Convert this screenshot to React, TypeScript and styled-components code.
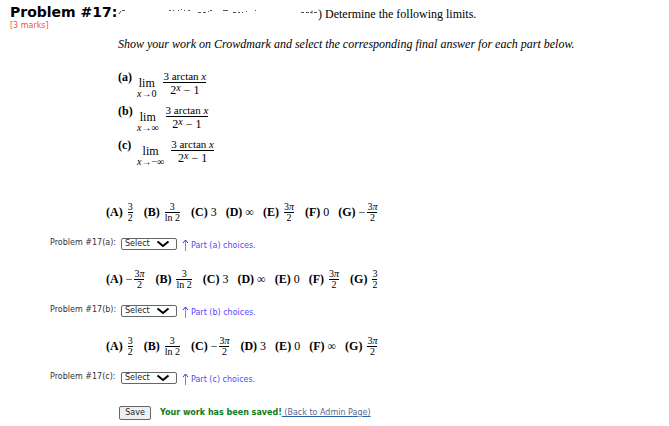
import React from "react";
import styled, { createGlobalStyle } from "styled-components";

const Global = createGlobalStyle`
  * { box-sizing: border-box; }
  body { margin: 0; background: #fff; color: #000; }
`;

const serif = `"Liberation Serif", "Times New Roman", serif`;
const sans = `"DejaVu Sans", Verdana, sans-serif`;

const Page = styled.form`
  padding: 3px 10px 0;
  font: 12px/16px ${serif};
`;
const Header = styled.header`
  display: grid;
  grid-template-columns: 108px 1fr;
`;
const Title = styled.h1`
  margin: 0;
  font: bold 14px/18px ${sans};
  white-space: nowrap;
`;
const Marks = styled.div`
  font: 8px/9px ${sans};
  color: #ff4a4a;
`;
const Statement = styled.div`
  display: flex;
  padding-top: 3px;
`;
const Faded = styled.svg`
  flex: none;
  width: 200px;
  height: 16px;
`;
const Instruction = styled.p`
  margin: 4px 0 0 108px;
  font-style: italic;
  line-height: 20px;
`;
const LimitList = styled.div`
  margin: 15px 0 0 108px;
`;
const LimitRow = styled.div`
  display: flex;
  align-items: flex-start;
  height: 34px;
`;
const Part = styled.b`
  width: 19px;
  line-height: 16px;
  font-weight: bold;
`;
const Lim = styled.div`
  display: flex;
  flex-direction: column;
  align-items: center;
  padding-top: 7px;
  line-height: 14px;
`;
const Under = styled.span`
  font-size: 10px;
  line-height: 8px;
  white-space: nowrap;
`;
const BigFraction = styled.div`
  margin: 1px 0 0 7px;
  text-align: center;
  font-size: 11px;
  line-height: 12px;
`;
const Numerator = styled.div`
  border-bottom: 1px solid #000;
`;
const Denominator = styled.div`
  padding-top: 1px;
  font-size: 12px;
`;
const Power = styled.sup`
  font-size: 10px;
  line-height: 0;
  font-style: italic;
  vertical-align: 3px;
`;
const GroupList = styled.div`
  margin-top: 29px;
`;
const Choices = styled.div`
  display: flex;
  align-items: center;
  gap: 9px;
  height: 24px;
  padding-left: 96px;
`;
const Choice = styled.span`
  display: flex;
  align-items: center;
  gap: 3px;
  white-space: nowrap;
`;
const Fraction = styled.span<{ $signed?: boolean }>`
  display: inline-flex;
  flex-direction: column;
  margin: 0 2px 0 ${(p) => (p.$signed ? "-1px" : "2px")};
  text-align: center;
  font-size: 10px;
  line-height: 8px;
`;
const Top = styled.span`
  padding-bottom: 1px;
  border-bottom: 1px solid #000;
`;
const Bottom = styled.span`
  padding-top: 1px;
`;
const Group = styled.section`
  margin-bottom: 16px;
`;
const AnswerRow = styled.div`
  display: flex;
  align-items: center;
  height: 14px;
  margin-top: 13px;
  padding-left: 40px;
  font: 8px/12px ${sans};
`;
const AnswerLabel = styled.label`
  width: 71px;
  padding-bottom: 2px;
  color: #333;
`;
const SelectBox = styled.span`
  display: grid;
  grid-template-columns: 1fr 17px;
  align-items: center;
  width: 56px;
  height: 12px;
`;
const Select = styled.select`
  grid-area: 1 / 1 / 2 / 3;
  appearance: none;
  height: 12px;
  padding: 0 3px;
  border: 1px solid #666;
  border-radius: 2px;
  background: #fff;
  color: #222;
  font: 8px/10px ${sans};
`;
const Chevron = styled.svg`
  grid-area: 1 / 2;
  width: 14px;
  height: 8px;
  margin-left: -4px;
  pointer-events: none;
`;
const Arrow = styled.svg`
  width: 7px;
  height: 12px;
  margin: 2px 2px 0 5px;
`;
const Hint = styled.span`
  padding-top: 4px;
  color: #5347ff;
`;
const Footer = styled.footer`
  display: flex;
  align-items: center;
  margin-top: 21px;
  padding-left: 109px;
  font: 8px/12px ${sans};
`;
const Save = styled.button`
  width: 32px;
  height: 14px;
  margin-right: 9px;
  padding: 0;
  border: 1px solid #666;
  border-radius: 2px;
  background: #efefef;
  color: #222;
  font: 8px/10px ${sans};
`;
const Saved = styled.b`
  color: #087c20;
`;
const Back = styled.a`
  color: #5b6695;
  white-space: pre;
  text-decoration: underline;
  text-decoration-color: #2864a8;
`;

type Value = "3/2" | "3/ln 2" | "3π/2" | "-3π/2" | "3" | "0" | "∞";

const letters = "ABCDEFG";

const groups: { part: string; values: Value[] }[] = [
  { part: "a", values: ["3/2", "3/ln 2", "3", "∞", "3π/2", "0", "-3π/2"] },
  { part: "b", values: ["-3π/2", "3/ln 2", "3", "∞", "0", "3π/2", "3/2"] },
  { part: "c", values: ["3/2", "3/ln 2", "-3π/2", "3", "0", "∞", "3π/2"] },
];

const limits = [
  { part: "a", target: "0" },
  { part: "b", target: "∞" },
  { part: "c", target: "−∞" },
];

function Answer({ value }: { value: Value }) {
  const signed = value.startsWith("-");
  const [top, bottom] = value.replace("-", "").split("/");
  if (!bottom) return <span>{value}</span>;
  return (
    <>
      {signed && <span>−</span>}
      <Fraction $signed={signed}>
        <Top>{top.endsWith("π") ? <>3<i>π</i></> : top}</Top>
        <Bottom>{bottom}</Bottom>
      </Fraction>
    </>
  );
}

function AnswerGroup({ part, values }: { part: string; values: Value[] }) {
  return (
    <Group>
      <Choices>
        {values.map((value, i) => (
          <Choice key={value}>
            <b>({letters[i]})</b>
            <Answer value={value} />
          </Choice>
        ))}
      </Choices>
      <AnswerRow>
        <AnswerLabel htmlFor={`part-${part}`}>Problem #17({part}):</AnswerLabel>
        <SelectBox>
          <Select id={`part-${part}`} defaultValue="">
            <option value="">Select</option>
            {values.map((v, i) => (
              <option key={v} value={v}>{letters[i]}</option>
            ))}
          </Select>
          <Chevron viewBox="0 0 14 8" aria-hidden="true">
            <path d="M1.500 1.500L7 6l5.500-4.500" fill="none" stroke="#000" strokeWidth="2" />
          </Chevron>
        </SelectBox>
        <Arrow viewBox="0 0 7 12" aria-hidden="true">
          <path d="M3.500 1v11" fill="none" stroke="#9a70ff" />
          <path d="M1 4l2.500-3L6 4" fill="none" stroke="#3c22ff" />
        </Arrow>
        <Hint>Part ({part}) choices.</Hint>
      </AnswerRow>
    </Group>
  );
}

export default function App() {
  return (
    <>
      <Global />
      <Page onSubmit={(e) => e.preventDefault()}>
        <Header>
          <div>
            <Title>Problem #17:</Title>
            <Marks>[3 marks]</Marks>
          </div>
          <Statement>
            <Faded viewBox="0 0 200 16" aria-hidden="true">
              <path
                d="M1 8l2-3M4 4.500h3M51 4.500h2M55 4.500h1M60 4.500h1M63 3.500h1M66 4.500h1M70 4.500h2M80 6.500h3M85 6.500h3M90 5.500h1M92 4.500h2M105 4.500h5M115 6.500h3M120 6.500h2M124 6.500h1M128 5.500h1M137 4.500h1M183 6.500h3M188 6.500h3M192 6.500h2M194 4.500v3M196 6.500h3"
                fill="none"
                stroke="#555"
              />
            </Faded>
            <span>) Determine the following limits.</span>
          </Statement>
        </Header>
        <Instruction>
          Show your work on Crowdmark and select the corresponding final answer for each part below.
        </Instruction>
        <LimitList>
          {limits.map(({ part, target }) => (
            <LimitRow key={part}>
              <Part>({part})</Part>
              <Lim>
                <span>lim</span>
                <Under><i>x</i>→{target}</Under>
              </Lim>
              <BigFraction>
                <Numerator>3 arctan <i>x</i></Numerator>
                <Denominator>2<Power>x</Power> − 1</Denominator>
              </BigFraction>
            </LimitRow>
          ))}
        </LimitList>
        <GroupList>
          {groups.map((group) => (
            <AnswerGroup key={group.part} {...group} />
          ))}
        </GroupList>
        <Footer>
          <Save type="submit">Save</Save>
          <Saved>Your work has been saved!</Saved>
          <Back href="#admin"> (Back to Admin Page)</Back>
        </Footer>
      </Page>
    </>
  );
}
